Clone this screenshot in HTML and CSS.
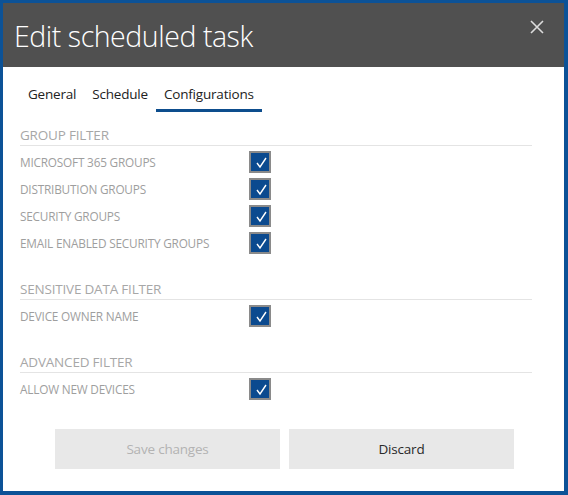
FILE: index.html
```html
<!DOCTYPE html>
<html>
<head>
<meta charset="utf-8">
<link rel="stylesheet" href="styles.css">
</head>
<body>
<div class="dialog">
  <div class="header">
    <h1 class="title">Edit scheduled task</h1>
    <button class="close" aria-label="Close">
      <svg width="14" height="14" viewBox="0 0 14 14"><path d="M1 1 L13 13 M13 1 L1 13" stroke="#dcdcdc" stroke-width="1.6" fill="none"/></svg>
    </button>
  </div>
  <div class="body">
    <div class="tabs">
      <div class="tab">General</div>
      <div class="tab">Schedule</div>
      <div class="tab active">Configurations</div>
    </div>

    <div class="section first">
      <div class="section-title">GROUP FILTER</div>
      <div class="rows">
        <div class="row"><span class="label">MICROSOFT 365 GROUPS</span><span class="check"><svg width="18" height="18" viewBox="0 0 18 18"><path d="M6 10 L9 14 L15 5" stroke="#fff" stroke-width="1.4" fill="none"/></svg></span></div>
        <div class="row"><span class="label">DISTRIBUTION GROUPS</span><span class="check"><svg width="18" height="18" viewBox="0 0 18 18"><path d="M6 10 L9 14 L15 5" stroke="#fff" stroke-width="1.4" fill="none"/></svg></span></div>
        <div class="row"><span class="label">SECURITY GROUPS</span><span class="check"><svg width="18" height="18" viewBox="0 0 18 18"><path d="M6 10 L9 14 L15 5" stroke="#fff" stroke-width="1.4" fill="none"/></svg></span></div>
        <div class="row"><span class="label">EMAIL ENABLED SECURITY GROUPS</span><span class="check"><svg width="18" height="18" viewBox="0 0 18 18"><path d="M6 10 L9 14 L15 5" stroke="#fff" stroke-width="1.4" fill="none"/></svg></span></div>
      </div>
    </div>

    <div class="section">
      <div class="section-title">SENSITIVE DATA FILTER</div>
      <div class="rows">
        <div class="row"><span class="label">DEVICE OWNER NAME</span><span class="check"><svg width="18" height="18" viewBox="0 0 18 18"><path d="M6 10 L9 14 L15 5" stroke="#fff" stroke-width="1.4" fill="none"/></svg></span></div>
      </div>
    </div>

    <div class="section">
      <div class="section-title">ADVANCED FILTER</div>
      <div class="rows">
        <div class="row"><span class="label">ALLOW NEW DEVICES</span><span class="check"><svg width="18" height="18" viewBox="0 0 18 18"><path d="M6 10 L9 14 L15 5" stroke="#fff" stroke-width="1.4" fill="none"/></svg></span></div>
      </div>
    </div>

    <div class="actions">
      <button class="btn disabled">Save changes</button>
      <button class="btn">Discard</button>
    </div>
  </div>
</div>
</body>
</html>
```

FILE: styles.css
```css
* { box-sizing: border-box; }
html, body { margin: 0; padding: 0; }
body {
  background: #0c5297;
  width: 568px;
  height: 495px;
  font-family: "Open Sans", "Noto Sans", sans-serif;
  padding: 3px 4px 4px 3px;
}
.dialog {
  background: #fff;
  height: 488px;
  display: flex;
  flex-direction: column;
}
.header {
  background: #505050;
  height: 64px;
  display: flex;
  justify-content: space-between;
  padding-left: 11px;
}
.title {
  margin: 0;
  font-weight: 300;
  font-size: 28.5px;
  letter-spacing: -0.45px;
  color: #fff;
  line-height: 36px;
  padding-top: 15px;
}
.close {
  background: none;
  border: 0;
  padding: 0;
  width: 14px;
  height: 14px;
  margin: 17px 20px 0 0;
  display: block;
}
.close svg { display: block; }
.body {
  padding: 17px 32px 0 17px;
}
.tabs {
  display: flex;
}
.tab {
  font-size: 13.5px;
  line-height: 20px;
  color: #222;
  padding: 0 8px 5px;
  border-bottom: 3px solid transparent;
  letter-spacing: -0.2px;
}
.tab.active {
  border-bottom-color: #0d4d8d;
}
.section {
  margin-top: 22px;
}
.section.first {
  margin-top: 12px;
}
.section-title {
  font-size: 13.5px;
  line-height: 20px;
  color: #a7a7a7;
  padding-top: 1px;
  padding-bottom: 0;
  border-bottom: 1px solid #e4e4e4;
  letter-spacing: -0.2px;
}
.rows {
  padding-top: 2px;
}
.row {
  display: grid;
  grid-template-columns: 229px 22px;
  align-items: center;
  height: 27px;
}
.label {
  font-size: 11.8px;
  color: #9e9e9e;
  letter-spacing: -0.2px;
}
.check {
  width: 22px;
  height: 22px;
  border: 2px solid #8a8a8a;
  background: #0b4a8f;
  display: block;
}
.check svg { display: block; }
.actions {
  display: flex;
  justify-content: center;
  gap: 9px;
  margin-top: 27px;
  margin-right: -17px;
}
.btn {
  width: 225px;
  height: 40px;
  border: 0;
  background: #e8e8e8;
  font-family: "Open Sans", "Noto Sans", sans-serif;
  font-size: 13.5px;
  color: #2a2a2a;
  letter-spacing: -0.2px;
}
.btn.disabled {
  color: #b3b3b3;
}
```
